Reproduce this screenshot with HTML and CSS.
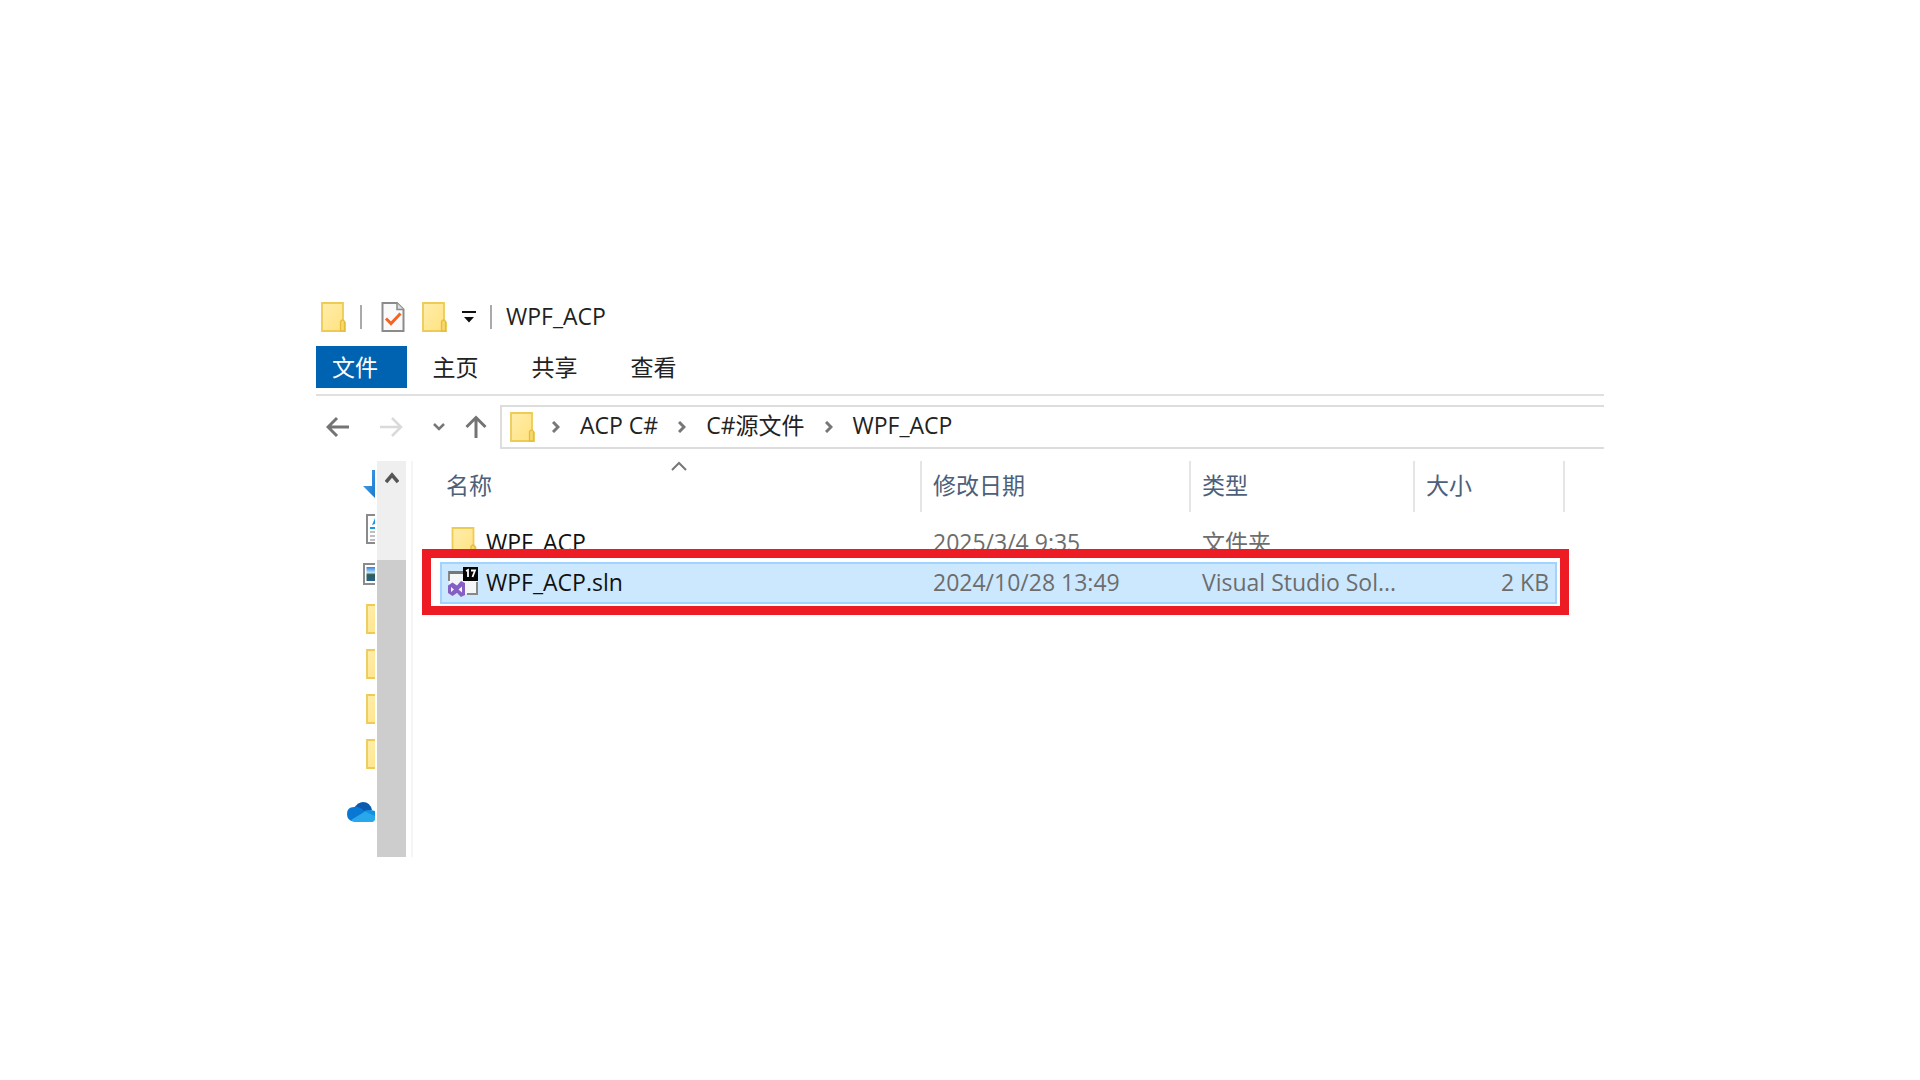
FILE: index.html
```html
<!DOCTYPE html>
<html lang="zh-CN">
<head>
<meta charset="utf-8">
<title>WPF_ACP</title>
<link rel="stylesheet" href="styles.css">
</head>
<body>
<svg class="defs" aria-hidden="true">
  <defs>
    <linearGradient id="paper" x1="0" y1="0" x2="1" y2="1"><stop offset="0" stop-color="#ffedab"/><stop offset="1" stop-color="#ffe27f"/></linearGradient>
    <linearGradient id="sky" x1="0" y1="0" x2="0" y2="1"><stop offset="0" stop-color="#2f7fe6"/><stop offset=".4" stop-color="#bfe3f2"/><stop offset=".55" stop-color="#2b5d55"/><stop offset="1" stop-color="#2a5f8f"/></linearGradient>
    <linearGradient id="arrow" x1="0" y1="0" x2="1" y2="1"><stop offset="0" stop-color="#4ba6ee"/><stop offset="1" stop-color="#1b78cc"/></linearGradient>
    <symbol id="folder" viewBox="0 0 25 30">
      <path d="M1 1H22V18.500L24 20.500V29H1Z" fill="url(#paper)" stroke="#edcb55" stroke-width="1.800"/>
      <path d="M19.500 29V19.500Q21.500 16.500 23.500 19.500V29Z" fill="#f7d86b" stroke="#e5bd3c" stroke-width="1.300"/>
    </symbol>
  </defs>
</svg>
<main class="window">
  <header class="titlebar">
    <svg class="folder" aria-hidden="true"><use href="#folder"/></svg>
    <span class="divider"></span>
    <button class="tool" aria-label="属性">
      <svg width="24" height="30" viewBox="0 0 24 30"><path d="M1.500 1H16L22.500 7.500V29H1.500Z" fill="#fafafa" stroke="#8b8b8b" stroke-width="2"/><path d="M16 1V7.500H22.500" fill="#ddd" stroke="#8b8b8b" stroke-width="1.500"/><path d="M5 16.500L10 21.500L19.500 11.500" fill="none" stroke="#f26522" stroke-width="3"/></svg>
    </button>
    <button class="tool new" aria-label="新建文件夹"><svg class="folder"><use href="#folder"/></svg></button>
    <button class="tool more" aria-label="自定义快速访问工具栏"><svg width="14" height="12" viewBox="0 0 14 12"><path d="M0 0H14V2H0ZM2 6H12L7 11.500Z" fill="#111"/></svg></button>
    <span class="divider"></span>
    <h1 class="title">WPF_ACP</h1>
  </header>
  <nav class="tabs">
    <button class="tab file">文件</button>
    <button class="tab">主页</button>
    <button class="tab">共享</button>
    <button class="tab">查看</button>
  </nav>
  <div class="navbar">
    <div class="history">
      <button class="tool" aria-label="后退"><svg width="24" height="24" viewBox="0 0 24 24"><path d="M23 12H2M11 3L2 12L11 21" fill="none" stroke="#747474" stroke-width="3"/></svg></button>
      <button class="tool" aria-label="前进"><svg width="24" height="24" viewBox="0 0 24 24"><path d="M1 12H22M13 3L22 12L13 21" fill="none" stroke="#dadada" stroke-width="2.500"/></svg></button>
      <button class="tool" aria-label="最近浏览的位置"><svg width="12" height="24" viewBox="0 0 12 24"><path d="M1 9L6 14L11 9" fill="none" stroke="#777" stroke-width="2.500"/></svg></button>
      <button class="tool" aria-label="上移"><svg width="24" height="24" viewBox="0 0 24 24"><path d="M12 23V2M2.500 12L12 2.500L21.500 12" fill="none" stroke="#747474" stroke-width="3"/></svg></button>
    </div>
    <div class="address">
      <svg class="folder" aria-hidden="true"><use href="#folder"/></svg>
      <svg class="chevron" viewBox="0 0 8 12"><path d="M1 1L6 6L1 11" /></svg>
      <a href="#">ACP C#</a>
      <svg class="chevron" viewBox="0 0 8 12"><path d="M1 1L6 6L1 11" /></svg>
      <a href="#">C#源文件</a>
      <svg class="chevron" viewBox="0 0 8 12"><path d="M1 1L6 6L1 11" /></svg>
      <a href="#">WPF_ACP</a>
    </div>
  </div>
  <div class="content">
    <ul class="places">
      <li><svg width="12" height="28" viewBox="0 0 12 28"><path d="M9 0H12V28L0 16H9Z" fill="url(#arrow)"/></svg></li>
      <li><svg width="9" height="30" viewBox="0 0 9 30"><path d="M9 1H1V29H9" fill="#fff" stroke="#8b8b8b" stroke-width="2"/><path d="M9 4V10L6 11ZM4 13H9V15H4Z" fill="#1c9ae0"/><path d="M4 18H9M4 22H9M4 26H9" stroke="#aaa" stroke-width="1.500"/></svg></li>
      <li><svg width="12" height="22" viewBox="0 0 12 22"><path d="M12 1H1V21H12" fill="#fff" stroke="#8b8b8b" stroke-width="2"/><path d="M3.500 4H12V18H3.500Z" fill="url(#sky)"/></svg></li>
      <li><svg width="9" height="30" viewBox="0 0 9 30"><use href="#folder" width="25" height="30"/></svg></li>
      <li><svg width="9" height="30" viewBox="0 0 9 30"><use href="#folder" width="25" height="30"/></svg></li>
      <li><svg width="9" height="30" viewBox="0 0 9 30"><use href="#folder" width="25" height="30"/></svg></li>
      <li><svg width="9" height="30" viewBox="0 0 9 30"><use href="#folder" width="25" height="30"/></svg></li>
      <li class="cloud"><svg width="28" height="20" viewBox="0 0 28 20"><path d="M7 6Q11 0 16 0Q23 0 25 8L14 14Z" fill="#0a5bb0"/><path d="M6 19.500Q0 18 0 12Q0 5 7 5Q12 4 17 9L20 11L7 19Z" fill="#0878d4"/><path d="M17 9Q22 7 28 9V17L18 15Z" fill="#1490df"/><path d="M4 18L18 9.500L28 14V18L26 20H7Z" fill="#28a8ea"/></svg></li>
    </ul>
    <div class="scrollbar">
      <button class="tool up" aria-label="向上滚动"><svg width="14" height="12" viewBox="0 0 14 12"><path d="M1 10L7 3L13 10" fill="none" stroke="#555" stroke-width="3.500"/></svg></button>
      <div class="thumb"></div>
    </div>
    <section class="files">
      <svg class="sort" width="16" height="10" viewBox="0 0 16 10"><path d="M1 9L8 2L15 9" fill="none" stroke="#777" stroke-width="2"/></svg>
      <table>
        <colgroup><col><col class="date"><col class="type"><col class="size"><col class="rest"></colgroup>
        <thead>
          <tr><th>名称</th><th>修改日期</th><th>类型</th><th colspan="2">大小</th></tr>
        </thead>
        <tbody>
          <tr class="first"><td><div class="name"><svg class="folder" aria-hidden="true"><use href="#folder"/></svg>WPF_ACP</div></td><td>2025/3/4 9:35</td><td>文件夹</td><td></td><td></td></tr>
          <tr class="selected"><td><div class="name"><svg width="30" height="30" viewBox="0 0 30 30" aria-hidden="true"><path d="M1 5H29V27H1Z" fill="#f5f6f8"/><path d="M1 14V5H15M19 27H29V15" fill="none" stroke="#888" stroke-width="2"/><path d="M1 4H15V7H1Z" fill="#777"/><path fill-rule="evenodd" d="M4.500 15.500L9 18.500L13 14L17 16V28L13 30L9 26L4.500 29L0 26V18.500ZM3 20V25L6 22.500ZM14 19.500L10.500 22.500L14 25.500Z" fill="#865fc5"/><path d="M15 0H30V14H15Z" fill="#050505"/><path d="M18 4L20 3V10M23 3.500H27L24.500 10" fill="none" stroke="#fff" stroke-width="1.800"/></svg>WPF_ACP.sln</div></td><td>2024/10/28 13:49</td><td>Visual Studio Sol...</td><td class="number">2 KB</td><td></td></tr>
        </tbody>
      </table>
      <div class="highlight"></div>
    </section>
  </div>
</main>
</body>
</html>
```
FILE: styles.css
```css
* { box-sizing: border-box; }
body {
  margin: 0;
  background: #fff;
  color: #222;
  font-family: "Open Sans", "Noto Sans CJK SC", sans-serif;
  font-size: 23px;
  line-height: 32px;
}
svg { display: block; flex: none; }
.defs { position: absolute; width: 0; height: 0; }
button { font: inherit; color: inherit; border: 0; background: none; padding: 0; }
a { color: inherit; text-decoration: none; }
.window { max-width: 1288px; margin: 298px auto 0; }
.folder { width: 25px; height: 30px; }

.titlebar { display: flex; align-items: center; height: 38px; padding-left: 5px; }
.divider { width: 2px; height: 24px; background: #aaa; margin: 0 14px; }
.titlebar .tool { margin-left: 5px; }
.titlebar .new { margin-left: 17px; }
.titlebar .more { margin-left: 15px; }
.title { margin: 0; padding-bottom: 2px; font-size: 23px; font-weight: 400; }

.tabs { display: flex; height: 60px; padding-top: 10px; border-bottom: 2px solid #e0e0e0; }
.tab { width: 99px; height: 42px; }
.tab.file { width: 91px; padding-right: 13px; margin-right: -1px; background: #0063b1; color: #fff; }

.navbar { display: flex; height: 65px; padding-top: 9px; }
.history { display: flex; align-items: center; justify-content: space-between; width: 184px; height: 44px; padding: 0 12px 0 10px; }
.history .tool:nth-child(3) { margin-right: -10px; }
.address { display: flex; flex: 1; align-items: center; height: 44px; padding-left: 8px; border: 2px solid #ddd; border-right: 0; }
.address a { padding-bottom: 4px; }
.chevron { width: 8px; height: 12px; margin: 0 20px; fill: none; stroke: #777; stroke-width: 3; }
.folder + .chevron { margin-left: 17px; }

.content { display: flex; min-height: 396px; }
.places { width: 59px; margin: 0; padding: 0; list-style: none; }
.places li { display: flex; align-items: center; justify-content: flex-end; height: 45px; }
.places .cloud { height: 72px; }
.scrollbar { display: flex; flex-direction: column; width: 29px; margin-left: 2px; background: #efefef; }
.up { display: flex; justify-content: center; align-items: center; height: 34px; }
.thumb { flex: 1; margin-top: 65px; background: #cdcdcd; }

.files { position: relative; flex: 1; margin-left: 5px; padding: 0 39px 0 27px; border-left: 2px solid #f5f5f5; }
.sort { position: absolute; top: 0; left: 258px; }
table { width: 100%; table-layout: fixed; border-spacing: 0; }
.date { width: 269px; }
.type { width: 224px; }
.size { width: 142px; }
.rest { width: 8px; }
th { height: 51px; padding: 0 11px 4px; text-align: left; font-weight: 400; color: #4c607a; border-right: 2px solid #e5e5e5; }
td { height: 42px; padding: 0 11px 2px; color: #6d6d6d; white-space: nowrap; }
th:first-child, td:first-child { padding-left: 6px; }
.first td { height: 50px; padding-top: 12px; }
.first td:first-child { padding-left: 8px; }
.name { display: flex; align-items: center; gap: 8px; color: #111; }
.name .folder { width: 30px; padding-left: 2px; }
.selected td { background: #cce8ff; border: 2px solid #a0d4ff; border-width: 2px 0; }
.selected td:first-child { border-left-width: 2px; }
.selected .number { padding-right: 6px; text-align: right; border-right-width: 2px; }
.selected td:last-child { background: none; border: 0; }
.highlight { position: absolute; top: 88px; left: 9px; right: 35px; height: 66px; border: 9px solid #ed1c24; }
```
